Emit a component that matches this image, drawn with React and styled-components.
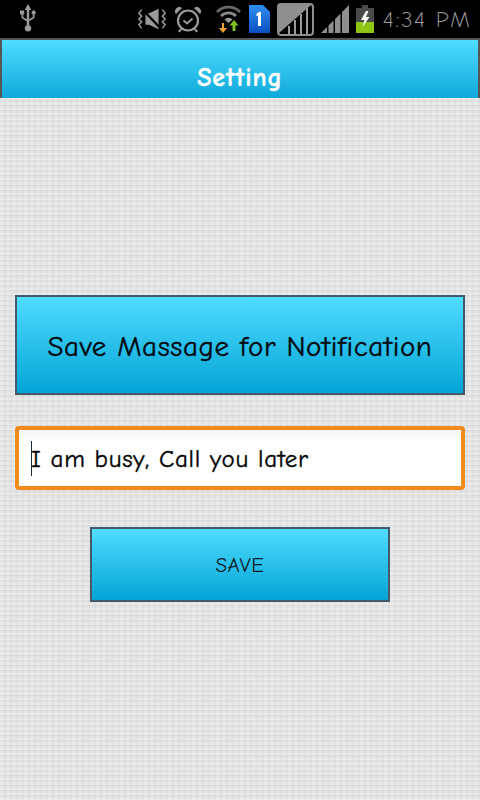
import React from 'react';
import styled, { createGlobalStyle } from 'styled-components';

const GlobalStyle = createGlobalStyle`
  html, body {
    margin: 0;
    padding: 0;
    background: #e2e2e2;
  }
`;

const handFont = `"Comic Sans MS", "Comic Neue", Lato, "Noto Sans", sans-serif`;

const Screen = styled.div`
  width: 480px;
  height: 800px;
  overflow: hidden;
  display: flex;
  flex-direction: column;
  font-family: ${handFont};
  background-color: #e1e1e1;
  background-image:
    repeating-linear-gradient(0deg, rgba(255, 255, 255, 0.22) 0 2px, transparent 2px 4px, rgba(0, 0, 0, 0.03) 4px 5px),
    repeating-linear-gradient(90deg, rgba(255, 255, 255, 0.16) 0 3px, transparent 3px 5px, rgba(0, 0, 0, 0.025) 5px 6px);
`;

const StatusBar = styled.div`
  height: 38px;
  flex-shrink: 0;
  background: #000;
  display: flex;
  align-items: center;
  padding: 0 9px 0 18px;
`;

const StatusRight = styled.div`
  margin-left: auto;
  display: flex;
  align-items: center;
  gap: 7px;
`;

const WifiSlot = styled.span`
  display: flex;
  margin-left: 8px;
`;

const Clock = styled.span`
  font-family: ${handFont};
  font-weight: 300;
  font-size: 23px;
  letter-spacing: 1.5px;
  color: #a0a0a0;
  margin-left: 2px;
  white-space: nowrap;
`;

const TitleBar = styled.div`
  height: 60px;
  flex-shrink: 0;
  box-sizing: border-box;
  border-top: 2px solid #565656;
  border-left: 2px solid #565656;
  border-right: 2px solid #565656;
  background: linear-gradient(#4fdcff, #0fa9db);
  display: flex;
  align-items: center;
  justify-content: center;
  padding-top: 17px;
`;

const Title = styled.h1`
  margin: 0;
  font-size: 26px;
  font-weight: 700;
  color: #fff;
  letter-spacing: 1px;
  -webkit-text-stroke: 0.4px #fff;
`;

const Content = styled.main`
  flex: 1;
  display: flex;
  flex-direction: column;
  align-items: center;
  padding: 197px 15px 0;
`;

const Banner = styled.div`
  width: 100%;
  height: 100px;
  box-sizing: border-box;
  border: 2px solid #44596a;
  background: linear-gradient(#4fdcff, #04a4d6);
  display: flex;
  align-items: center;
  justify-content: center;
  padding-top: 2px;
  font-size: 29px;
  letter-spacing: 0.6px;
  color: #020a12;
  -webkit-text-stroke: 0.4px #020a12;
`;

const InputBox = styled.div`
  width: 100%;
  height: 64px;
  margin-top: 31px;
  box-sizing: border-box;
  border: 4px solid #f28a1e;
  border-radius: 4px;
  background: linear-gradient(#f4f4f4, #fff 22%);
  display: flex;
  align-items: center;
  padding-left: 12px;
  font-size: 25px;
  letter-spacing: 0.7px;
  color: #060606;
  -webkit-text-stroke: 0.4px #060606;
`;

const Caret = styled.span`
  width: 1px;
  height: 35px;
  background: #1a2a3a;
  margin-right: -1px;
`;

const SaveButton = styled.button`
  width: 300px;
  height: 75px;
  margin-top: 37px;
  box-sizing: border-box;
  border: 2px solid #44596a;
  background: linear-gradient(#4fdcff, #04a4d6);
  font-family: ${handFont};
  font-size: 21px;
  letter-spacing: 0.6px;
  color: #0a1a26;
  padding: 0;
`;

const UsbIcon = () => (
  <svg width="20" height="30" viewBox="0 0 20 30" fill="#9a9a9a">
    <path d="M10 0l3.4 6H11.2v15.2a3.3 3.3 0 1 1-2.4 0V17.6L3.6 14V10.6H2V6.4h4.2v4.2H5.2v2.5l3.6 2.5V6H6.6z" />
    <path d="M11.2 15.2l3.6-2.3V10.4a2 2 0 1 1 1.7 0v3.5l-5.3 3.4z" />
  </svg>
);

const MuteIcon = () => (
  <svg width="31" height="24" viewBox="0 0 33 24" fill="none" stroke="#9a9a9a" strokeWidth="1.6">
    <path d="M9 6h4l10-5v22l-10-5H9z" fill="#9a9a9a" stroke="none" />
    <path d="M5 2l-3 4 3 3-3 3 3 3-3 3 3 4M27 2l3 4-3 3 3 3-3 3 3 3-3 4" />
    <path d="M6 2l20 21" stroke="#000" strokeWidth="2.4" />
  </svg>
);

const AlarmIcon = () => (
  <svg width="26" height="27" viewBox="0 0 26 27" fill="none" stroke="#9a9a9a">
    <circle cx="13" cy="14.5" r="10" strokeWidth="2.2" />
    <path d="M8.5 14.5l3.5 3 5.5-5" strokeWidth="2" />
    <path d="M1 7.5L6.5 2A4 4 0 0 0 1 7.5zM25 7.5L19.5 2A4 4 0 0 1 25 7.5z" fill="#9a9a9a" strokeWidth="1" />
    <path d="M6 23l-2 3M20 23l2 3" strokeWidth="2.2" />
  </svg>
);

const WifiIcon = () => (
  <svg width="25" height="30" viewBox="0 0 25 30" fill="none">
    <path d="M1 8a16 16 0 0 1 23 0" stroke="#6a6a6a" strokeWidth="2.6" />
    <path d="M5 12a10.500 10.500 0 0 1 15 0" stroke="#8a8a8a" strokeWidth="2.6" />
    <path d="M8.500 15.500a5.500 5.500 0 0 1 8 0l-4 3.500z" fill="#9a9a9a" />
    <path d="M6 19v5H3l4 5 4-5H8v-5z" fill="#f0a030" />
    <path d="M18 16l-4.500 5.500H16.500V27h3v-5.500h3z" fill="#7fc41e" />
  </svg>
);

const SimIcon = () => (
  <svg width="22" height="28" viewBox="0 0 22 28">
    <defs>
      <linearGradient id="simFill" x1="0" y1="0" x2="0" y2="1">
        <stop offset="0" stopColor="#2f8ef0" />
        <stop offset="1" stopColor="#0a4fc0" />
      </linearGradient>
    </defs>
    <path d="M1 0h14l7 7v21H1z" fill="url(#simFill)" />
    <path d="M9 8l4-1.500V21h-3V10.500l-2 .5z" fill="#fff" />
  </svg>
);

const NoSignalIcon = () => (
  <svg width="37" height="33" viewBox="0 0 37 33" fill="none">
    <rect x="1" y="1" width="35" height="31" rx="3" fill="#000" stroke="#8f8f8f" strokeWidth="2" />
    <path d="M2 2h32L2 30z" fill="#8f8f8f" />
    <path d="M12 31v-8M18 31V17M24 31V11M30 31V5" stroke="#9a9a9a" strokeWidth="2" />
  </svg>
);

const SignalIcon = () => (
  <svg width="28" height="28" viewBox="0 0 28 28" fill="#8f8f8f">
    <path d="M0 28l6-6v6zM7.500 28V20.500l5-5V28zM14 28V14l5.500-5.500V28zM21 28V7l7-7v28z" />
  </svg>
);

const BatteryIcon = () => (
  <svg width="18" height="28" viewBox="0 0 18 28">
    <rect x="6" y="0" width="6" height="3" fill="#4a4a4a" />
    <rect x="0" y="3" width="18" height="14" fill="#4a4a4a" />
    <rect x="0" y="17" width="18" height="11" fill="#8fc414" />
    <path d="M10 6l-5 9h3.500l-2 7 7-10H10l2.500-6z" fill="#fff" />
  </svg>
);

export default function App() {
  return (
    <>
      <GlobalStyle />
      <Screen>
        <StatusBar>
          <UsbIcon />
          <StatusRight>
            <MuteIcon />
            <AlarmIcon />
            <WifiSlot>
              <WifiIcon />
            </WifiSlot>
            <SimIcon />
            <NoSignalIcon />
            <SignalIcon />
            <BatteryIcon />
            <Clock>4:34 PM</Clock>
          </StatusRight>
        </StatusBar>
        <TitleBar>
          <Title>Setting</Title>
        </TitleBar>
        <Content>
          <Banner>Save Massage for Notification</Banner>
          <InputBox>
            <Caret />
            I am busy, Call you later
          </InputBox>
          <SaveButton>SAVE</SaveButton>
        </Content>
      </Screen>
    </>
  );
}
